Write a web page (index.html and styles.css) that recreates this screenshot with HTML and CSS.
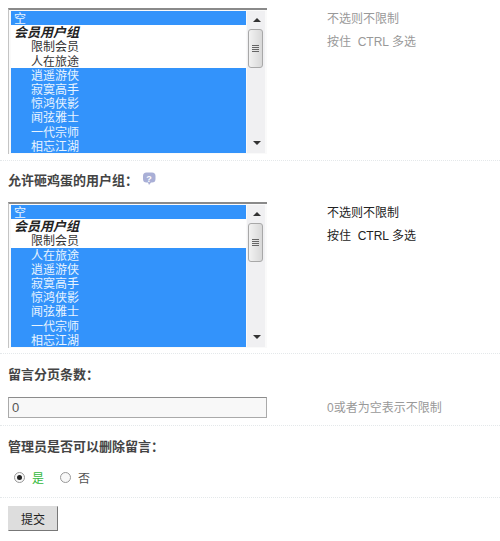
FILE: index.html
```html
<!DOCTYPE html>
<html lang="zh-CN">
<head>
    <meta charset="UTF-8">
    <title>留言设置</title>
    <link rel="stylesheet" href="styles.css">
</head>
<body>
    <form class="settings">
        <div class="row row-first">
            <div class="field">
                <div class="listbox">
                    <div class="options">
                        <div class="opt sel">空</div>
                        <div class="opt group">会员用户组</div>
                        <div class="opt child">限制会员</div>
                        <div class="opt child">人在旅途</div>
                        <div class="opt child sel">逍遥游侠</div>
                        <div class="opt child sel">寂寞高手</div>
                        <div class="opt child sel">惊鸿侠影</div>
                        <div class="opt child sel">闻弦雅士</div>
                        <div class="opt child sel">一代宗师</div>
                        <div class="opt child sel">相忘江湖</div>
                    </div>
                    <div class="scrollbar">
                        <span class="arrow up"></span>
                        <span class="thumb"><i></i><i></i><i></i><i></i></span>
                        <span class="arrow down"></span>
                    </div>
                </div>
            </div>
            <div class="hint hint-grey">
                <p>不选则不限制</p>
                <p>按住&nbsp; CTRL 多选</p>
            </div>
        </div>

        <div class="row row-list">
            <div class="label">允许砸鸡蛋的用户组：
                <svg class="help" width="16" height="16" viewBox="0 0 16 16">
                    <path d="M5 1.5h6a3.500 3.500 0 0 1 3.500 3.500v3a3.500 3.500 0 0 1-3.500 3.500h-1l-2 2.500-1-2.500h-1.500a3.500 3.500 0 0 1-3.500-3.500v-3a3.500 3.500 0 0 1 3.500-3.500z" fill="#a9afd6"/>
                    <text x="8" y="10.500" class="help-mark">?</text>
                </svg>
            </div>
            <div class="split">
                <div class="listbox">
                    <div class="options">
                        <div class="opt sel">空</div>
                        <div class="opt group">会员用户组</div>
                        <div class="opt child">限制会员</div>
                        <div class="opt child sel">人在旅途</div>
                        <div class="opt child sel">逍遥游侠</div>
                        <div class="opt child sel">寂寞高手</div>
                        <div class="opt child sel">惊鸿侠影</div>
                        <div class="opt child sel">闻弦雅士</div>
                        <div class="opt child sel">一代宗师</div>
                        <div class="opt child sel">相忘江湖</div>
                    </div>
                    <div class="scrollbar">
                        <span class="arrow up"></span>
                        <span class="thumb"><i></i><i></i><i></i><i></i></span>
                        <span class="arrow down"></span>
                    </div>
                </div>
                <div class="hint hint-dark">
                    <p>不选则不限制</p>
                    <p>按住&nbsp; CTRL 多选</p>
                </div>
            </div>
        </div>

        <div class="row row-input">
            <div class="label">留言分页条数：</div>
            <div class="split">
                <input class="text" type="text" value="0">
                <div class="hint hint-grey"><p>0或者为空表示不限制</p></div>
            </div>
        </div>

        <div class="row row-radio">
            <div class="label">管理员是否可以删除留言：</div>
            <div class="radios">
                <label class="on"><span class="radio checked"></span>是</label>
                <label><span class="radio"></span>否</label>
            </div>
        </div>

        <div class="row-submit">
            <button class="btn" type="button">提交</button>
        </div>
    </form>
</body>
</html>
```

FILE: styles.css
```css
* {
    margin: 0;
    padding: 0;
    box-sizing: border-box;
}

body {
    width: 500px;
    height: 541px;
    overflow: hidden;
    background: #fff;
    color: #333;
    font-family: "Liberation Sans", "Noto Sans CJK SC", sans-serif;
    font-size: 12px;
}

.row {
    border-bottom: 1px dotted #e4e8ea;
}

.row-first {
    display: flex;
    height: 161px;
    padding: 8px 0 0 8px;
}

.row-list {
    height: 193px;
}

.row-input {
    height: 72px;
}

.row-radio {
    height: 72px;
}

.label {
    display: flex;
    align-items: center;
    gap: 3px;
    height: 38px;
    padding: 0 8px;
    font-size: 13px;
    font-weight: bold;
    color: #444;
}

.row-list .label {
    height: 36px;
    margin-bottom: 5px;
}

.row-input .label {
    margin-bottom: 5px;
}

.row-radio .label {
    height: 39px;
}

.split {
    display: flex;
    padding-left: 8px;
}

/* fake multi select, so the old style scrollbar can be drawn */
.listbox {
    display: flex;
    width: 259px;
    height: 146px;
    padding: 1px 0 1px 2px;
    border-top: 2px solid #8a8a8a;
    border-left: 1px solid #c4c4c4;
    background: #fafafa;
    overflow: hidden;
}

.options {
    width: 235px;
    flex: none;
    overflow: hidden;
    background: #fff;
}

.opt {
    height: 14.2px;
    line-height: 14px;
    padding: 1px 0 0 3px;
    white-space: nowrap;
    color: #333;
}

.opt.sel {
    background: #3393fb;
    color: #e8f4ff;
}

.group {
    font-size: 13px;
    font-weight: bold;
    font-style: italic;
    color: #222;
}

.child {
    padding-left: 20px;
}

.scrollbar {
    position: relative;
    flex: none;
    width: 18px;
    margin-left: 1px;
    background: #f0f0f2;
}

.arrow {
    position: absolute;
    left: 6px;
    border-left: 4px solid transparent;
    border-right: 4px solid transparent;
}

.arrow.up {
    top: 7px;
    border-bottom: 4px solid #333;
}

.arrow.down {
    bottom: 8px;
    border-top: 4px solid #333;
}

.thumb {
    position: absolute;
    top: 18px;
    left: 1px;
    width: 15px;
    height: 39px;
    display: flex;
    flex-direction: column;
    justify-content: center;
    align-items: center;
    gap: 1px;
    background: linear-gradient(to right, #f2f2f2, #d8d8d8);
    border: 1px solid #a8a8a8;
    border-radius: 3px;
}

.thumb i {
    display: block;
    width: 7px;
    height: 1px;
    background: #666;
}

.hint {
    padding-left: 60px;
    line-height: 22px;
}

.hint-grey {
    color: #999;
}

.hint-dark {
    color: #222;
}

.hint p {
    margin-bottom: 1px;
}

.text {
    width: 259px;
    height: 21px;
    padding-left: 3px;
    border: 1px solid #aaa;
    border-top-color: #8c8c8c;
    background: #f8f8f8;
    color: #555;
    font-family: inherit;
    font-size: 13px;
}

.row-input .hint {
    padding-top: 1px;
    line-height: 21px;
}

.radios {
    display: flex;
    gap: 16px;
    padding: 4px 0 0 14px;
}

.radios label {
    display: flex;
    align-items: center;
    gap: 7px;
    color: #555;
}

.radios .on {
    color: #33b83d;
}

.radio {
    display: flex;
    align-items: center;
    justify-content: center;
    width: 11px;
    height: 11px;
    border: 1px solid #999;
    border-radius: 50%;
    background: #f8f8f8;
}

.radio.checked::after {
    content: "";
    width: 5px;
    height: 5px;
    border-radius: 50%;
    background: #222;
}

.row-submit {
    padding: 8px 8px 0;
}

.btn {
    width: 50px;
    height: 25px;
    border: 1px solid #ddd;
    border-right-color: #777;
    border-bottom-color: #777;
    background: #ddd;
    color: #222;
    font-family: inherit;
    font-size: 12px;
}

.help-mark {
    fill: #fff;
    font-size: 9px;
    font-weight: bold;
    text-anchor: middle;
}
```
